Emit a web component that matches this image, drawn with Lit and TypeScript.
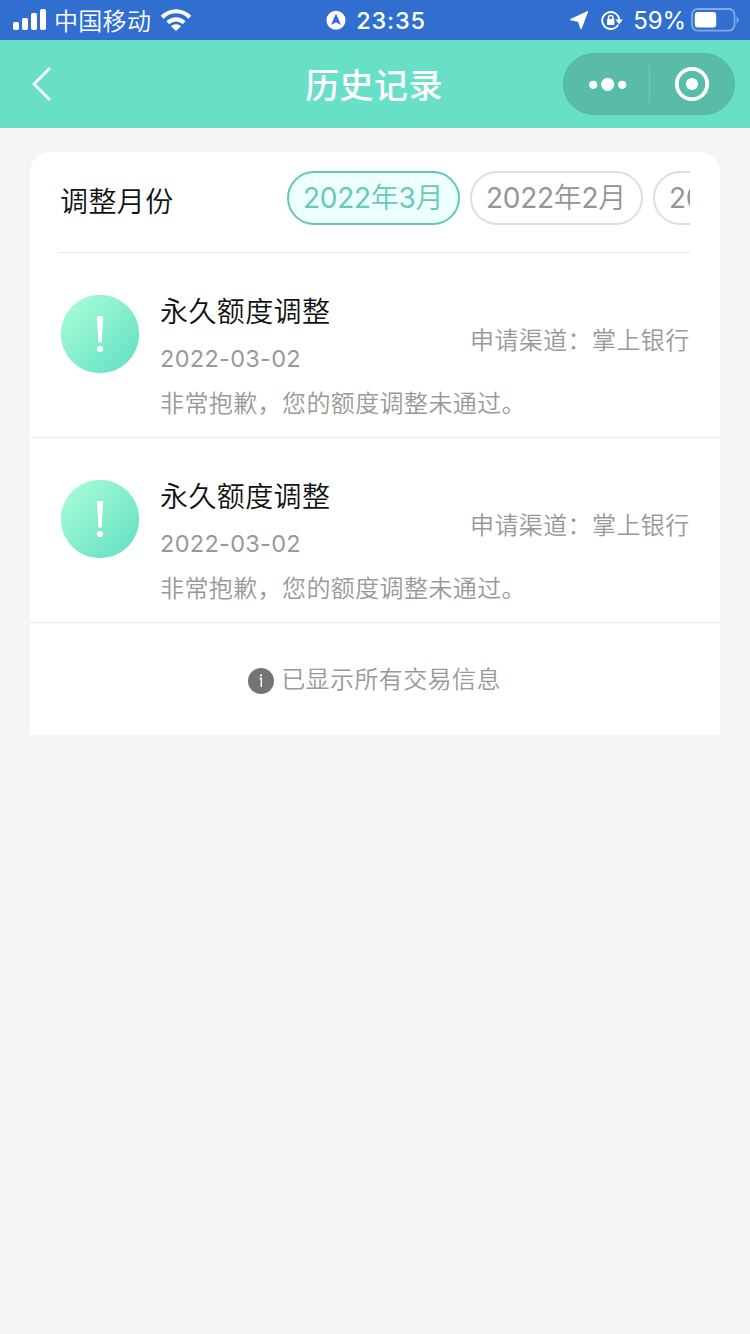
import { LitElement, html, css } from "lit";
import { customElement, property } from "lit/decorators.js";

interface AdjustRecord {
  title: string;
  date: string;
  message: string;
  channel: string;
}

const MONTHS: [string, string][] = [["2022", "3"], ["2022", "2"], ["2022", "1"]];

const RECORDS: AdjustRecord[] = [
  { title: "永久额度调整", date: "2022-03-02", message: "非常抱歉，您的额度调整未通过。", channel: "掌上银行" },
  { title: "永久额度调整", date: "2022-03-02", message: "非常抱歉，您的额度调整未通过。", channel: "掌上银行" },
];

@customElement("status-bar")
class StatusBar extends LitElement {
  static styles = css`
    :host {
      display: grid;
      grid-template-columns: 1fr auto 1fr;
      align-items: center;
      box-sizing: border-box;
      height: 40px;
      padding: 0 11px 0 13px;
      background: #306fd0;
      color: #fff;
      font-size: 24px;
      line-height: 36px;
    }
    svg { display: block; flex: none; }
    .side { display: flex; align-items: center; }
    .signal { margin-right: 8px; }
    .carrier { letter-spacing: 0.3px; padding-top: 4px; }
    .wifi { margin-left: 9px; }
    .clock { display: flex; align-items: center; gap: 10px; }
    .time { font-weight: 500; letter-spacing: 0.75px; font-size: 23.5px; padding-top: 2px; }
    .right { justify-content: flex-end; }
    .lock { margin: 0 10px 0 12px; }
    .percent { margin-right: 5px; font-size: 24px; font-weight: 400; letter-spacing: -0.1px; padding-top: 2px; }
  `;
  render() {
    return html`
      <div class="side">
        <svg class="signal" width="33" height="22" viewBox="0 0 33 22" fill="#fff">
          <rect x="0" y="13" width="6" height="8" rx="1.8" />
          <rect x="9" y="9" width="6" height="12" rx="1.8" />
          <rect x="18" y="4" width="6" height="17" rx="1.8" />
          <rect x="27" y="0" width="6" height="21" rx="1.8" />
        </svg>
        <span class="carrier">中国移动</span>
        <svg class="wifi" width="32" height="24" viewBox="0 0 32 24">
          <g fill="none" stroke="#fff" stroke-width="4.1">
            <path d="M2.2 9.2C10 1.2 22 1.2 29.8 9.2" />
            <path d="M7.8 14.8C12.5 10.2 19.5 10.2 24.2 14.8" />
          </g>
          <path d="M11 18.2C14 15.6 18 15.6 21 18.2L16 23Z" fill="#fff" />
        </svg>
      </div>
      <div class="clock">
        <svg width="20" height="20" viewBox="0 0 20 20">
          <circle cx="10" cy="10.3" r="9.5" fill="#fff" />
          <path d="M10 3.5L15 15L10 12.2L5 15Z" fill="#306fd0" />
        </svg>
        <span class="time">23:35</span>
      </div>
      <div class="side right">
        <svg width="20" height="20" viewBox="0 0 20 20">
          <path d="M18.4 1.8L12 18.6L9.6 11.2L1.8 9.6Z" fill="#fff" stroke="#fff" stroke-width="1.4" stroke-linejoin="round" />
        </svg>
        <svg class="lock" width="22" height="20" viewBox="0 0 22 20">
          <path d="M17.2 14.6A8.5 8.5 0 1 1 18.2 9.8" fill="none" stroke="#fff" stroke-width="1.9" />
          <path d="M14.4 9.6H21.8L18.1 14.2Z" fill="#fff" />
          <rect x="6" y="9" width="7.4" height="6" rx="0.8" fill="#fff" />
          <path d="M7.5 9.4V7.6a2.2 2.2 0 0 1 4.4 0V9.4" fill="none" stroke="#fff" stroke-width="1.5" />
        </svg>
        <span class="percent">59%</span>
        <svg width="48" height="24" viewBox="0 0 48 24">
          <rect x="1" y="1" width="42.5" height="21.6" rx="5.5" fill="none" stroke="#84aae6" stroke-width="1.8" />
          <rect x="3.8" y="3.9" width="21.4" height="15.6" rx="3" fill="#fff" />
          <path d="M45.6 8.4C48.4 9.8 48.4 14 45.6 15.4Z" fill="#84aae6" />
        </svg>
      </div>
    `;
  }
}

@customElement("nav-bar")
class NavBar extends LitElement {
  @property() heading = "";
  static styles = css`
    :host {
      display: grid;
      grid-template-columns: 1fr auto 1fr;
      align-items: center;
      box-sizing: border-box;
      height: 88px;
      padding: 0 15px 0 31px;
      background: #68dfc7;
      color: #fff;
    }
    svg { display: block; }
    .heading { font-size: 34px; line-height: 48px; font-weight: 500; letter-spacing: 0.4px; margin-right: 18px; padding-top: 3px; }
    .capsule {
      display: flex;
      align-items: center;
      justify-self: end;
      box-sizing: border-box;
      width: 172px;
      height: 62px;
      border-radius: 31px;
      background: #58bca8;
      border: 1px solid #5bb5a3;
    }
    .half { width: 85px; display: flex; justify-content: center; }
    .half.more { box-sizing: border-box; padding-left: 3px; }
    .split { width: 1px; height: 38px; background: #72cbb9; }
  `;
  render() {
    return html`
      <svg width="22" height="36" viewBox="0 0 22 36">
        <path d="M19 2L3 18L19 34" fill="none" stroke="#fff" stroke-width="2.7" />
      </svg>
      <span class="heading">${this.heading}</span>
      <div class="capsule">
        <div class="half more">
          <svg width="38" height="14" viewBox="0 0 38 14" fill="#fff">
            <circle cx="4.2" cy="7.8" r="4.1" /><circle cx="18.7" cy="7.3" r="6.6" /><circle cx="33.2" cy="7.8" r="4.1" />
          </svg>
        </div>
        <div class="split"></div>
        <div class="half">
          <svg width="36" height="36" viewBox="0 0 36 36">
            <circle cx="18" cy="18" r="15.2" fill="none" stroke="#fff" stroke-width="3.8" />
            <circle cx="18" cy="18" r="6.1" fill="#fff" />
          </svg>
        </div>
      </div>
    `;
  }
}

@customElement("month-picker")
class MonthPicker extends LitElement {
  static styles = css`
    :host {
      display: flex;
      align-items: flex-start;
      justify-content: space-between;
      box-sizing: border-box;
      height: 101px;
      margin: 0 30px;
      padding-top: 19px;
      border-bottom: 1px solid #e6e6e6;
    }
    .label { font-size: 28px; line-height: 62px; color: #111; letter-spacing: 0.4px; white-space: nowrap; }
    .months { display: flex; gap: 10px; width: 403px; overflow: hidden; }
    .month {
      flex: none;
      box-sizing: border-box;
      width: 173px;
      height: 54px;
      border: 2px solid #dedede;
      border-radius: 27px;
      padding-left: 14px;
      color: #959595;
      font-size: 28px;
      line-height: 51px;
      letter-spacing: -0.2px;
      white-space: nowrap;
    }
    .num { font-weight: 400; letter-spacing: -0.3px; }
    .month.active { border-color: #66c6b4; background: #ecfffd; color: #66cab7; }
  `;
  render() {
    return html`
      <span class="label">调整月份</span>
      <div class="months">
        ${MONTHS.map(
          ([y, m], i) => html`<div class="month ${i === 0 ? "active" : ""}"><span class="num">${y}</span>年<span class="num">${m}</span>月</div>`
        )}
      </div>
    `;
  }
}

@customElement("record-row")
class RecordRow extends LitElement {
  @property({ attribute: false }) record!: AdjustRecord;
  static styles = css`
    :host {
      display: flex;
      align-items: flex-start;
      box-sizing: border-box;
      height: 185px;
      padding: 42px 30px 0;
      border-bottom: 1px solid #e9e9e9;
      color: #999;
      font-size: 24px;
      letter-spacing: 0.4px;
      white-space: nowrap;
    }
    .icon { display: block; flex: none; margin-right: 20px; }
    .text { flex: 1; min-width: 0; }
    .title { font-size: 28px; line-height: 34px; color: #111; }
    .date { line-height: 30px; margin-top: 15px; letter-spacing: 0.3px; font-size: 23.5px; font-weight: 400; }
    .message { line-height: 34px; margin-top: 13px; }
    .channel { flex: none; width: 220px; margin-left: -100px; margin-top: 29px; line-height: 34px; }
  `;
  render() {
    const r = this.record;
    return html`
      <svg class="icon" width="80" height="80" viewBox="0 0 80 80">
        <defs>
          <linearGradient id="g" x1="0.1" y1="0.1" x2="0.9" y2="0.9">
            <stop offset="0" stop-color="#a5fbd5" /><stop offset="1" stop-color="#66e1c5" />
          </linearGradient>
        </defs>
        <circle cx="40" cy="39" r="39.2" fill="url(#g)" />
        <path d="M36.9 21H43.1L41.7 47.5H38.3Z" fill="#fff" />
        <circle cx="40" cy="54" r="3.1" fill="#fff" />
      </svg>
      <div class="text">
        <div class="title">${r.title}</div>
        <div class="date">${r.date}</div>
        <div class="message">${r.message}</div>
      </div>
      <div class="channel">申请渠道：${r.channel}</div>
    `;
  }
}

@customElement("app-root")
class AppRoot extends LitElement {
  static styles = css`
    :host {
      display: block;
      min-height: 1334px;
      background: #f5f5f5;
      font-family: Inter, "Noto Sans CJK SC", sans-serif;
      font-weight: 350;
    }
    .card { margin: 24px 30px 0; background: #fff; border-radius: 20px 20px 0 0; }
    .end {
      display: flex;
      align-items: center;
      justify-content: center;
      gap: 7px;
      height: 112px;
      padding-right: 1px;
      color: #999;
      font-size: 24px;
      line-height: 34px;
      letter-spacing: 0.4px;
    }
    .end svg { display: block; margin-top: 3px; }
    .end span { padding-top: 1px; }
  `;
  render() {
    return html`
      <status-bar></status-bar>
      <nav-bar heading="历史记录"></nav-bar>
      <main class="card">
        <month-picker></month-picker>
        ${RECORDS.map((r) => html`<record-row .record=${r}></record-row>`)}
        <div class="end">
          <svg width="26" height="26" viewBox="0 0 26 26">
            <circle cx="13" cy="13" r="13" fill="#747474" />
            <path d="M11.6 10.5H13.3V19" fill="none" stroke="#fff" stroke-width="1.5" />
            <circle cx="13" cy="7.4" r="1.1" fill="#fff" />
          </svg>
          <span>已显示所有交易信息</span>
        </div>
      </main>
    `;
  }
}
